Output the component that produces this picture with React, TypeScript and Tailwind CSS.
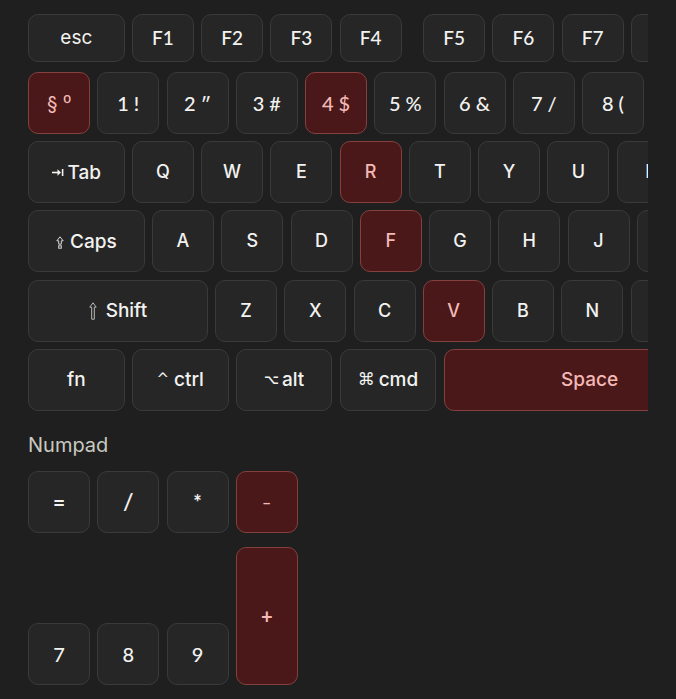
import React from "react";

type KeyProps = {
  children?: React.ReactNode;
  size?: string;
  active?: boolean;
  font?: "sans" | "geo";
};

function Key({ children, size = "w-[62px] h-[62px]", active = false, font = "sans" }: KeyProps) {
  const face =
    font === "geo"
      ? "font-['Lato',sans-serif] font-medium text-[19px]"
      : "font-['Inter',sans-serif] font-medium text-[18px]";
  const tone = active
    ? "bg-[#4a1818] border-[#83403f] text-[#f4b8b6]"
    : "bg-[#262626] border-[#3a3a3a] text-[#f2f2f0]";
  return (
    <div
      className={`${size} ${tone} ${face} shrink-0 rounded-[10px] border flex items-center justify-center leading-none`}
    >
      {children}
    </div>
  );
}

function ShiftGlyph() {
  return (
    <svg width="8" height="18" viewBox="0 0 8 18" className="mr-[9px]">
      <path d="M4 0.8 L7.2 5.2 H5.3 V17.2 H2.7 V5.2 H0.8 Z" fill="none" stroke="#b9b9b6" strokeWidth="1" strokeLinejoin="round" />
    </svg>
  );
}

function CapsGlyph() {
  return (
    <svg width="8" height="13" viewBox="0 0 8 13" className="mr-[6px] mt-[3px]">
      <path d="M4 0.8 L7.2 4.8 H5.3 V8.2 H2.7 V4.8 H0.8 Z" fill="none" stroke="#d8d8d6" strokeWidth="1" strokeLinejoin="round" />
      <rect x="2.7" y="9.8" width="2.6" height="2.4" fill="none" stroke="#d8d8d6" strokeWidth="1" />
    </svg>
  );
}

function TabGlyph() {
  return (
    <svg width="12" height="9" viewBox="0 0 12 9" className="mr-[4px] mt-[1px]">
      <path d="M0 4.5 H7" stroke="#f2f2f0" strokeWidth="1.6" />
      <path d="M5.5 1.3 L9 4.5 L5.5 7.7 Z" fill="#f2f2f0" />
      <path d="M10.6 1 V8" stroke="#f2f2f0" strokeWidth="1.6" />
    </svg>
  );
}

function Digit({ a, b }: { a: string; b: string }) {
  return (
    <span className="flex items-baseline gap-[5px] text-[20px]">
      <span>{a}</span>
      <span>{b}</span>
    </span>
  );
}

const wide = "w-[96.625px] h-[62px]";
const fkey = "w-[62px] h-[48px]";

export default function App() {
  return (
    <div className="min-h-screen bg-[#1f1f1f] pt-[13.5px] px-[28px] pb-[14px]">
      {/* main board, clipped on the right */}
      <div className="w-[620px] overflow-hidden">
        <div className="flex flex-col gap-[7.25px] w-max">
          {/* function row */}
          <div className="flex gap-[7.25px] mb-[3px]">
            <Key size="w-[96.625px] h-[48px]">
              <span className="text-[19px] font-normal">esc</span>
            </Key>
            <Key size={fkey} font="geo">F1</Key>
            <Key size={fkey} font="geo">F2</Key>
            <Key size={fkey} font="geo">F3</Key>
            <Key size={fkey} font="geo">F4</Key>
            <div className="w-[7px] shrink-0" />
            <Key size={fkey} font="geo">F5</Key>
            <Key size={fkey} font="geo">F6</Key>
            <Key size={fkey} font="geo">F7</Key>
            <Key size={fkey} font="geo" />
          </div>

          {/* number row */}
          <div className="flex gap-[7.25px]">
            <Key active>
              <span className="flex items-baseline gap-[6px] text-[19px] font-normal">
                <span>§</span>
                <span className="font-['Liberation_Sans',sans-serif] text-[20px]">º</span>
              </span>
            </Key>
            <Key font="geo"><Digit a="1" b="!" /></Key>
            <Key font="geo"><Digit a="2" b="″" /></Key>
            <Key font="geo"><Digit a="3" b="#" /></Key>
            <Key active font="geo"><Digit a="4" b="$" /></Key>
            <Key font="geo"><Digit a="5" b="%" /></Key>
            <Key font="geo"><Digit a="6" b="&" /></Key>
            <Key font="geo"><Digit a="7" b="/" /></Key>
            <Key font="geo"><Digit a="8" b="(" /></Key>
            <Key font="geo" />
          </div>

          {/* top letter row */}
          <div className="flex gap-[7.25px]">
            <Key size={wide}><TabGlyph /><span className="text-[19px]">Tab</span></Key>
            <Key>Q</Key>
            <Key>W</Key>
            <Key>E</Key>
            <Key active>R</Key>
            <Key>T</Key>
            <Key>Y</Key>
            <Key>U</Key>
            <Key>I</Key>
          </div>

          {/* home row */}
          <div className="flex gap-[7.25px]">
            <Key size="w-[116.75px] h-[62px]"><CapsGlyph /><span className="text-[19px]">Caps</span></Key>
            <Key>A</Key>
            <Key>S</Key>
            <Key>D</Key>
            <Key active>F</Key>
            <Key>G</Key>
            <Key>H</Key>
            <Key>J</Key>
            <Key />
          </div>

          {/* bottom letter row */}
          <div className="flex gap-[7.25px]">
            <Key size="w-[179.75px] h-[62px]"><ShiftGlyph /><span className="text-[19px]">Shift</span></Key>
            <Key>Z</Key>
            <Key>X</Key>
            <Key>C</Key>
            <Key active>V</Key>
            <Key>B</Key>
            <Key>N</Key>
            <Key />
          </div>

          {/* modifier row */}
          <div className="flex gap-[7.25px]">
            <Key size={wide}><span className="text-[19px]">fn</span></Key>
            <Key size={wide}>
              <span className="mr-[5px] text-[15px] font-['DejaVu_Sans',sans-serif] font-normal">^</span>
              <span className="text-[19px]">ctrl</span>
            </Key>
            <Key size={wide}>
              <span className="mr-[3px] text-[13px] font-['DejaVu_Sans',sans-serif] font-bold">⌥</span>
              <span className="text-[19px]">alt</span>
            </Key>
            <Key size={wide}>
              <span className="mr-[4px] text-[17px] font-['DejaVu_Sans',sans-serif]">⌘</span>
              <span className="text-[19px]">cmd</span>
            </Key>
            <Key size="w-[292px] h-[62px]" active>
              <span className="text-[19px]">Space</span>
            </Key>
          </div>
        </div>
      </div>

      {/* numpad */}
      <div className="mt-[20.5px] text-[20px] leading-[28px] text-[#c9c9c1] font-['Inter',sans-serif]">
        Numpad
      </div>
      <div className="mt-[11.5px] flex flex-col">
        <div className="flex gap-[7.25px]">
          <Key font="geo"><span className="text-[21px] font-bold">=</span></Key>
          <Key font="geo"><span className="text-[23px] font-semibold">/</span></Key>
          <Key font="geo"><span className="text-[20px] font-bold">*</span></Key>
          <Key active font="geo"><span className="text-[16px] font-bold">–</span></Key>
        </div>
        <div className="mt-[14px] flex items-end gap-[7.25px]">
          <Key font="geo"><span className="text-[20px]">7</span></Key>
          <Key font="geo"><span className="text-[20px]">8</span></Key>
          <Key font="geo"><span className="text-[20px]">9</span></Key>
          <Key size="w-[62px] h-[138px]" active font="geo"><span className="text-[20px] font-bold">+</span></Key>
        </div>
      </div>
    </div>
  );
}
